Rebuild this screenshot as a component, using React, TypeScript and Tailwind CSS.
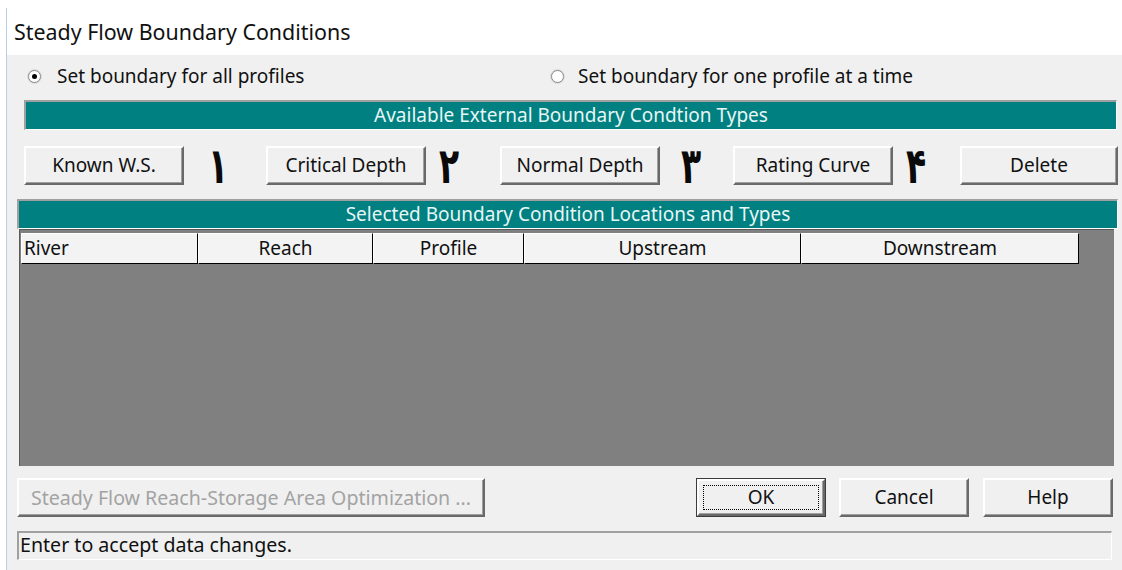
import React from 'react'

const face = "font-['Noto_Sans','DejaVu_Sans',sans-serif]"

// classic raised 3D push button
const Btn = ({ label, w, disabled, isDefault }: { label: string; w: string; disabled?: boolean; isDefault?: boolean }) => {
  if (isDefault) {
    return (
      <div className={`${w} h-[39px] border border-[#3c3c3c] flex`}>
        <div className="flex-1 bg-[#f0f0f0] border-2 border-t-white border-l-white border-b-[#696969] border-r-[#696969] shadow-[inset_-1px_-1px_0_#a0a0a0] flex p-[4px]">
          <div className="flex-1 border border-dotted border-black flex items-center justify-center text-[19px] text-[#111]">
            {label}
          </div>
        </div>
      </div>
    )
  }
  return (
    <div
      className={`${w} h-[39px] bg-[#f0f0f0] border-2 border-t-white border-l-white border-b-[#696969] border-r-[#696969] shadow-[inset_-1px_-1px_0_#a0a0a0] flex items-center justify-center whitespace-nowrap ${disabled ? 'text-[19.6px] text-[#a3a3a3]' : 'text-[19px] text-[#111]'}`}
    >
      {label}
    </div>
  )
}

// big persian digit drawn between buttons
const Num = ({ d, w, pl }: { d: string; w: string; pl: string }) => (
  <div className={`${w} ${pl} h-[39px] flex items-center`}>
    <span className="font-['DejaVu_Sans',sans-serif] font-bold text-[33px] leading-none text-[#0a0a0a] inline-block scale-y-[1.5]">{d}</span>
  </div>
)

const Radio = ({ checked }: { checked?: boolean }) => (
  <div className="w-[13px] h-[13px] rounded-full bg-white border border-[#8a8a8a] shadow-[0_0_0_1px_#dcdcdc] flex items-center justify-center">
    {checked && <div className="w-[5px] h-[5px] rounded-full bg-black" />}
  </div>
)

const TealBar = ({ text, className }: { text: string; className: string }) => (
  <div className={`${className} h-[30px] border-t-2 border-l-2 border-[#a0a0a0] border-b border-r border-b-white border-r-white bg-[#008080] flex items-center justify-center text-[19px] text-[#e8f6f6]`}>
    {text}
  </div>
)

const columns = [
  { name: 'River', w: 'w-[177px]', left: true },
  { name: 'Reach', w: 'w-[175px]' },
  { name: 'Profile', w: 'w-[151px]' },
  { name: 'Upstream', w: 'w-[277px]' },
  { name: 'Downstream', w: 'w-[278px]' },
]

export default function App() {
  return (
    <div className={`w-[1122px] h-[570px] bg-white flex ${face}`}>
      <div className="w-[6px]" />
      <div className="flex-1 flex flex-col mt-[8px] border-l border-[#b4cfe8]">
        <div className="h-[47px] pl-[7px] pt-[9px] text-[21.4px] leading-[30px] text-[#111]">
          Steady Flow Boundary Conditions
        </div>

        <div className="flex-1 bg-[#f0f0f0] flex flex-col">
          {/* profile mode */}
          <div className="mt-[9px] h-[24px] flex items-center text-[19px] text-[#111]">
            <div className="w-[544px] pl-[21px] flex items-center gap-[16px]">
              <Radio checked />
              <span>Set boundary for all profiles</span>
            </div>
            <div className="flex items-center gap-[14px]">
              <Radio />
              <span>Set boundary for one profile at a time</span>
            </div>
          </div>

          <TealBar text="Available External Boundary Condtion Types" className="mt-[12px] ml-[17px] w-[1093px]" />

          <div className="mt-[16px] ml-[17px] flex">
            <Btn label="Known W.S." w="w-[160px]" />
            <Num d="۱" w="w-[82px]" pl="pl-[24px]" />
            <Btn label="Critical Depth" w="w-[160px]" />
            <Num d="۲" w="w-[74px]" pl="pl-[13px]" />
            <Btn label="Normal Depth" w="w-[160px]" />
            <Num d="۳" w="w-[73px]" pl="pl-[21px]" />
            <Btn label="Rating Curve" w="w-[160px]" />
            <Num d="۴" w="w-[67px]" pl="pl-[13px]" />
            <Btn label="Delete" w="w-[158px]" />
          </div>

          <TealBar text="Selected Boundary Condition Locations and Types" className="mt-[14px] ml-[10px] w-[1101px]" />

          {/* boundary table */}
          <div className="ml-[12px] w-[1095px] h-[237px] bg-[#808080] border-t border-l border-[#5a5a5a] pt-[3px] pl-[1px]">
            <div className="flex h-[31px]">
              {columns.map((c) => (
                <div
                  key={c.name}
                  className={`${c.w} bg-[#f3f3f3] border-t border-l border-t-white border-l-white border-b border-r border-b-black border-r-black flex items-center text-[19px] text-[#111] ${c.left ? 'justify-start pl-[2px]' : 'justify-center'}`}
                >
                  {c.name}
                </div>
              ))}
            </div>
          </div>

          <div className="mt-[12px] ml-[10px] flex">
            <Btn label="Steady Flow Reach-Storage Area Optimization ..." w="w-[468px]" disabled />
            <div className="w-[211px]" />
            <Btn label="OK" w="w-[130px]" isDefault />
            <div className="w-[13px]" />
            <Btn label="Cancel" w="w-[130px]" />
            <div className="w-[14px]" />
            <Btn label="Help" w="w-[130px]" />
          </div>

          <div className="mt-[14px] ml-[10px] w-[1095px] h-[29px] border-t-2 border-l-2 border-t-[#a0a0a0] border-l-[#a0a0a0] border-b border-r border-b-white border-r-white flex items-start pl-[1px] text-[19.6px] leading-[24px] text-[#111]">
            Enter to accept data changes.
          </div>
        </div>
      </div>
    </div>
  )
}
